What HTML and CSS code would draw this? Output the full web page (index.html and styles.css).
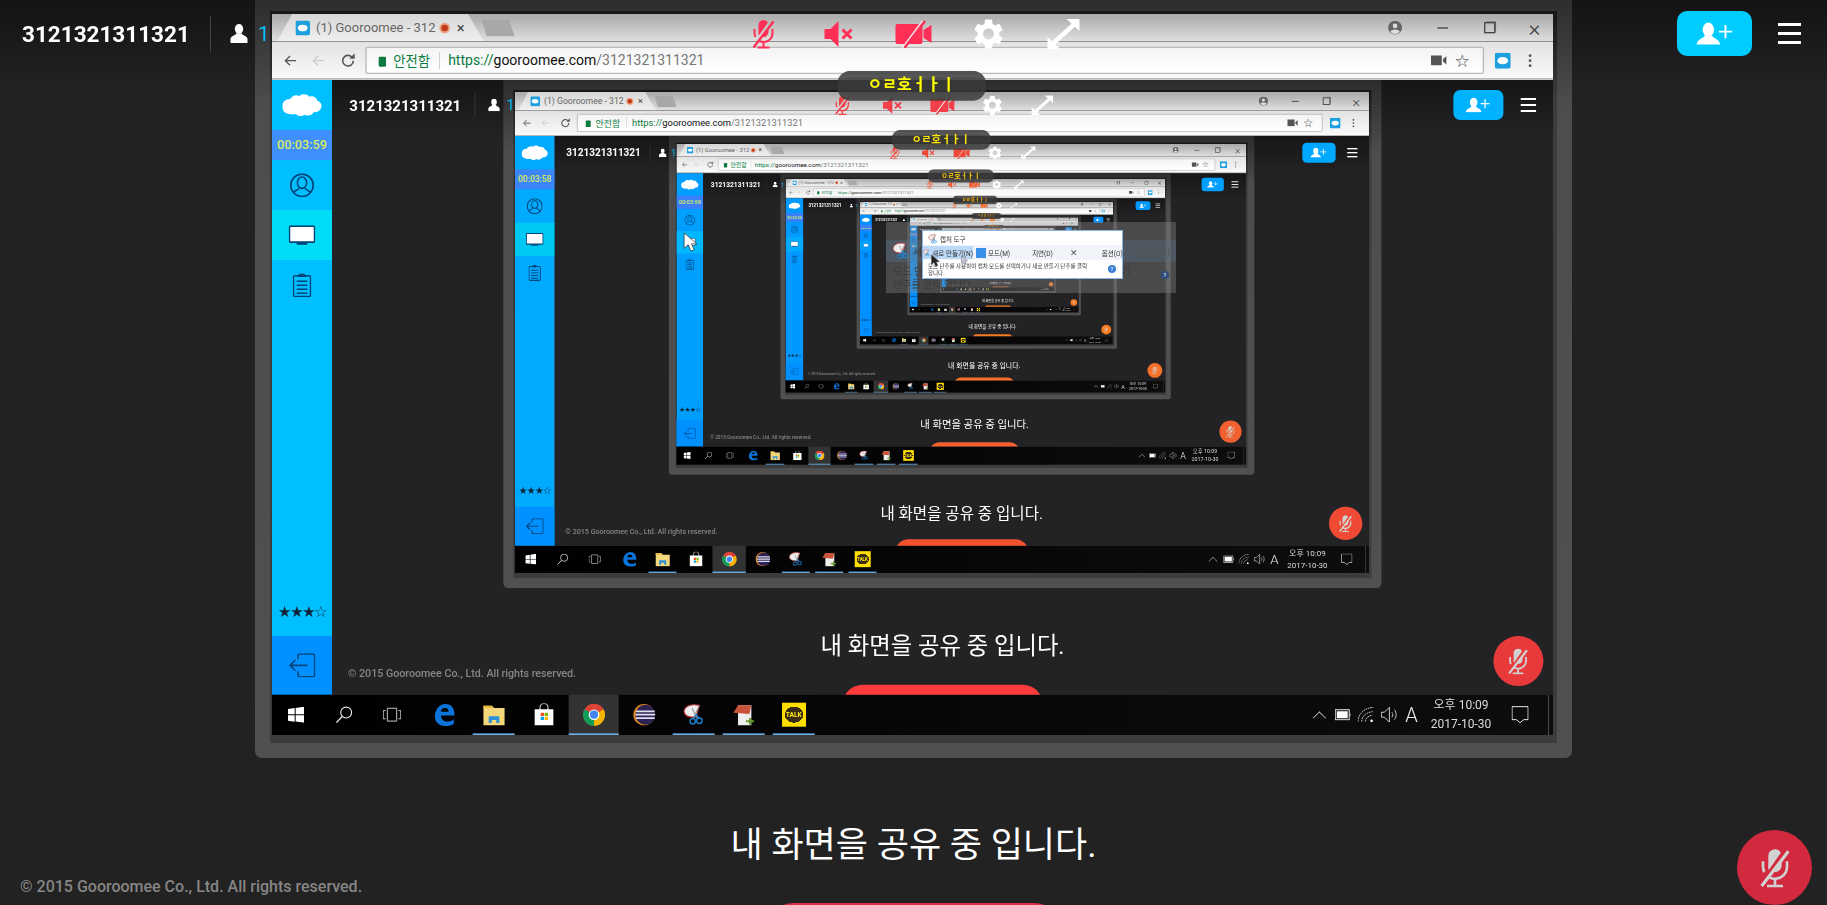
FILE: index.html
```html
<!DOCTYPE html>
<html lang="ko">

<head>
  <meta charset="utf-8">
  <meta name="viewport" content="width=device-width">
  <title>Gooroomee - 3121321311321</title>
  <link rel="stylesheet" href="styles.css">
</head>

<body>
  <svg class="defs" xmlns="http://www.w3.org/2000/svg">
    <symbol id="i-mic" viewBox="0 0 24 30">
      <path d="M7 13V6a5 5 0 0 1 9.4-2.4L7.4 16.5A5 5 0 0 1 7 13z" fill="currentColor"/>
      <path d="M17 10v3a5 5 0 0 1-7 4.6z" fill="currentColor"/>
      <path d="M3 10v4c0 1.5.4 3 1 4M21 10v4a9 9 0 0 1-13.500 7.800M12 23v5M6 28.500h12" fill="none" stroke="currentColor" stroke-width="2"/>
      <path d="M22 2.500L2 28.500" fill="none" stroke="currentColor" stroke-width="2.4"/>
    </symbol>
    <symbol id="i-mute" viewBox="0 0 28 26">
      <path d="M0 8h6l8-8v26l-8-8H0z" fill="currentColor"/>
      <path d="M18 8.500l9 9M27 8.500l-9 9" fill="none" stroke="currentColor" stroke-width="3"/>
    </symbol>
    <symbol id="i-cam" viewBox="0 0 36 28">
      <path d="M2 4h23a2 2 0 0 1 2 2v16a2 2 0 0 1-2 2H2a2 2 0 0 1-2-2V6a2 2 0 0 1 2-2zM28 10l8-5v18l-8-5z" fill="currentColor"/>
      <path d="M27 1L7 28" fill="none" stroke="#e8e8e8" stroke-width="2"/>
      <path d="M29.500 1L9 28" fill="none" stroke="currentColor" stroke-width="2.500"/>
    </symbol>
    <symbol id="i-gear" viewBox="2 2 20 20">
      <path d="M19.14 12.94c.04-.3.06-.61.06-.94 0-.32-.02-.64-.07-.94l2.03-1.58c.18-.14.23-.41.12-.61l-1.92-3.32c-.12-.22-.37-.29-.59-.22l-2.39.96c-.5-.38-1.03-.7-1.62-.94l-.36-2.54c-.04-.24-.24-.41-.48-.41h-3.84c-.24 0-.43.17-.47.41l-.36 2.54c-.59.24-1.13.57-1.62.94l-2.39-.96c-.22-.08-.47 0-.59.22L2.74 8.87c-.12.21-.08.47.12.61l2.03 1.58c-.05.3-.09.63-.09.94s.02.64.07.94l-2.03 1.58c-.18.14-.23.41-.12.61l1.92 3.32c.12.22.37.29.59.22l2.39-.96c.5.38 1.03.7 1.62.94l.36 2.54c.05.24.24.41.48.41h3.84c.24 0 .44-.17.47-.41l.36-2.54c.59-.24 1.13-.56 1.62-.94l2.39.96c.22.08.47 0 .59-.22l1.92-3.32c.12-.22.07-.47-.12-.61l-2.01-1.58zM12 15.6c-1.98 0-3.6-1.62-3.6-3.6s1.62-3.6 3.6-3.6 3.6 1.62 3.6 3.6-1.62 3.6-3.6 3.6z" fill="currentColor"/>
    </symbol>
    <symbol id="i-expand" viewBox="0 0 32 30">
      <path d="M6 24L26 6" fill="none" stroke="currentColor" stroke-width="4.500"/>
      <path d="M19 0h13v12zM0 18l13 12H0z" fill="currentColor"/>
    </symbol>
    <symbol id="i-person" viewBox="0 0 18 19">
      <ellipse cx="9" cy="5" rx="4.200" ry="5" fill="currentColor"/>
      <path d="M6 9.500c-.2 2-5 2-5.500 5.500V19h17v-4c-.5-3.500-5.300-3.500-5.500-5.500z" fill="currentColor"/>
    </symbol>
    <symbol id="i-invite" viewBox="0 0 40 24">
      <ellipse cx="13" cy="8" rx="6" ry="7.500" fill="currentColor"/>
      <path d="M9 14c-.3 3-7.500 3-8.500 9.500h25c-1-6.500-8.200-6.500-8.500-9.500z" fill="currentColor"/>
      <path d="M31 3v14M24 10h14" fill="none" stroke="currentColor" stroke-width="2"/>
    </symbol>
    <symbol id="i-cloud" viewBox="0 0 60 36">
      <path d="M12 31c-7 0-12-5-11-12C0 13 6 8 12 9c2-5 9-8 14-5 4-4 12-3 15 1 5-2 11 1 12 6 5 1 7 6 6 10-1 5-6 8-11 7-3 5-10 7-14 4-4 3-10 3-13-1-3 1-7 1-9 0z" fill="#fff"/>
    </symbol>
    <symbol id="i-user" viewBox="0 0 36 36">
      <circle cx="18" cy="18" r="16.800" fill="none" stroke="currentColor" stroke-width="2.400"/>
      <ellipse cx="18" cy="14" rx="7" ry="8.500" fill="none" stroke="currentColor" stroke-width="2.400"/>
      <path d="M13.500 22c-.5 3-6 3-8 7M22.500 22c.5 3 6 3 8 7" fill="none" stroke="currentColor" stroke-width="2.400"/>
    </symbol>
    <symbol id="i-screen" viewBox="0 0 40 30">
      <rect x="1.200" y="1.200" width="37.600" height="24" rx="1.500" fill="#fff" stroke="currentColor" stroke-width="2.400"/>
      <path d="M12 26h16v3H12z" fill="currentColor"/>
    </symbol>
    <symbol id="i-clip" viewBox="0 0 28 36">
      <rect x="1.200" y="3.500" width="25.600" height="31.300" rx="2.500" fill="none" stroke="currentColor" stroke-width="2.400"/>
      <path d="M9 4.500l2-3h6l2 3zM6 12h16M6 18h16M6 24h16M6 30h16" fill="none" stroke="currentColor" stroke-width="2.200"/>
    </symbol>
    <symbol id="i-exit" viewBox="0 0 40 36">
      <path d="M14 9V4a3 3 0 0 1 3-3h19a3 3 0 0 1 3 3v28a3 3 0 0 1-3 3H17a3 3 0 0 1-3-3v-5" fill="none" stroke="currentColor" stroke-width="2.400"/>
      <path d="M28 18H2M10 10l-8 8 8 8" fill="none" stroke="currentColor" stroke-width="2.400"/>
    </symbol>
    <symbol id="i-arrow" viewBox="0 0 20 20">
      <path d="M18 10H3M9 3l-7 7 7 7" fill="none" stroke="currentColor" stroke-width="2"/>
    </symbol>
    <symbol id="i-reload" viewBox="0 0 24 24">
      <path d="M20 12a8 8 0 1 1-2.500-5.800" fill="none" stroke="currentColor" stroke-width="2.400"/>
      <path d="M14 9h8V1z" fill="currentColor"/>
    </symbol>
    <symbol id="i-fav" viewBox="0 0 24 24">
      <rect width="24" height="24" rx="3" fill="#1ea0e0"/>
      <ellipse cx="12" cy="12" rx="8" ry="5.500" fill="#fff"/>
    </symbol>
    <symbol id="i-account" viewBox="0 0 24 24">
      <circle cx="12" cy="12" r="12" fill="currentColor"/>
      <circle cx="12" cy="9" r="4" fill="#ddd"/>
      <path d="M4 19c2-5 14-5 16 0-4 5-12 5-16 0z" fill="#ddd"/>
    </symbol>
    <symbol id="i-win" viewBox="0 0 24 24">
      <path d="M0 3.500l10-1.500v9.500H0zM11.500 1.800L24 0v11.500H11.500zM0 13h10v9.500L0 21zM11.500 13H24v11l-12.500-1.800z" fill="#fff"/>
    </symbol>
    <symbol id="i-search" viewBox="0 0 24 24">
      <circle cx="15" cy="9" r="7.500" fill="none" stroke="#eee" stroke-width="1.500"/>
      <path d="M9.500 14.500L1.500 23" fill="none" stroke="#eee" stroke-width="1.800"/>
    </symbol>
    <symbol id="i-tasks" viewBox="0 0 32 24">
      <path d="M8 1h16v22H8zM5 5H1v14h4M27 5h4v14h-4" fill="none" stroke="#ddd" stroke-width="1.500"/>
    </symbol>
    <symbol id="i-edge" viewBox="0 0 30 30">
      <path d="M3 15C4 7 10 1 17 1c8 0 12 6 12 15H11c0 5 4 8 9 8 3 0 6-1 8-3v6c-3 2-6 3-10 3C8 30 2 24 3 15zM11 11h10c0-4-2-5-5-5s-5 2-5 5z" fill="#0a74da"/>
    </symbol>
    <symbol id="i-folder" viewBox="0 0 30 30">
      <path d="M1 3h11l3 3h14v23H1z" fill="#f4d77a"/>
      <path d="M1 3h11l3 3H1z" fill="#e8b93f"/>
      <path d="M8 26v-9h14v9h-4v-4h-6v4z" fill="#2f8fd8"/>
    </symbol>
    <symbol id="i-store" viewBox="0 0 30 34">
      <path d="M9 11V6a6 6 0 0 1 12 0v5" fill="none" stroke="#ddd" stroke-width="1.600"/>
      <path d="M1 9h28v24H1z" fill="#fff"/>
      <path d="M10 14h5v5h-5z" fill="#f25022"/>
      <path d="M16 14h5v5h-5z" fill="#7fba00"/>
      <path d="M10 20h5v5h-5z" fill="#00a4ef"/>
      <path d="M16 20h5v5h-5z" fill="#ffb900"/>
    </symbol>
    <symbol id="i-chrome" viewBox="0 0 32 32">
      <circle cx="16" cy="16" r="15.500" fill="#db4437"/>
      <path d="M16 16L2.600 8.200A15.500 15.500 0 0 0 16 31.500z" fill="#0f9d58"/>
      <path d="M16 16v15.500A15.500 15.500 0 0 0 29.400 8.200z" fill="#f4b400"/>
      <circle cx="16" cy="16" r="7.500" fill="#fff"/>
      <circle cx="16" cy="16" r="5.800" fill="#4285f4"/>
    </symbol>
    <symbol id="i-eclipse" viewBox="0 0 34 34">
      <circle cx="17" cy="17" r="16" fill="#e08a1e"/>
      <circle cx="19" cy="17" r="15" fill="#2c2255"/>
      <path d="M5 12h28M4 17h30M5 22h28" stroke="#dfe0ee" stroke-width="2.600"/>
    </symbol>
    <symbol id="i-snip" viewBox="0 0 34 34">
      <path d="M2 12C3 4 14 0 25 3l-5 17C10 22 3 19 2 12z" fill="#eee" stroke="#b33" stroke-width="1.600"/>
      <path d="M25 3l-8 17M14 7l7 15" stroke="#999" stroke-width="1.600"/>
      <circle cx="15" cy="27" r="4" fill="none" stroke="#1c86d8" stroke-width="2"/>
      <circle cx="25" cy="26" r="4" fill="none" stroke="#1c86d8" stroke-width="2"/>
      <path d="M16 23l4-5M24 22l-4-6" stroke="#1c86d8" stroke-width="2"/>
    </symbol>
    <symbol id="i-notes" viewBox="0 0 34 34">
      <path d="M8 3h20v30H8z" fill="#eee"/>
      <path d="M1 14L8 3h20l-3 13z" fill="#c8523a"/>
      <path d="M20 27h12M26 22v10" stroke="#6a9a2c" stroke-width="3"/>
    </symbol>
    <symbol id="i-cursor" viewBox="0 0 16 22">
      <path d="M1 1v17l4.500-4 3 7 3.500-1.500-3-6.500H15z" fill="currentColor" stroke="#333" stroke-width=".8"/>
    </symbol>
    <symbol id="i-battery" viewBox="0 0 32 22">
      <path d="M1 1h28v20H1z" fill="none" stroke="#eee" stroke-width="2"/>
      <path d="M4 4h22v14H4z" fill="#fff"/>
      <path d="M30 8h2v6h-2z" fill="#eee"/>
    </symbol>
    <symbol id="i-wifi" viewBox="0 0 28 26">
      <path d="M1 24C1 12 11 2 26 1M7 24c0-8 7-15 18-16M13 24c0-5 4-9 11-10" fill="none" stroke="#bbb" stroke-width="1.600" stroke-dasharray="3 1"/>
      <circle cx="23" cy="23" r="2.200" fill="#fff"/>
    </symbol>
    <symbol id="i-speaker" viewBox="0 0 28 26">
      <path d="M1 9h5l8-8v24l-8-8H1z" fill="none" stroke="#ddd" stroke-width="1.500"/>
      <path d="M18 9c2 2 2 6 0 8M22 5c4 4 4 12 0 16" fill="none" stroke="#ddd" stroke-width="1.400"/>
    </symbol>
    <symbol id="i-notify" viewBox="0 0 28 28">
      <path d="M1 1h26v21h-7l-6 5-6-5H1z" fill="none" stroke="#eee" stroke-width="1.600"/>
    </symbol>
    <symbol id="i-camsmall" viewBox="0 0 26 18">
      <path d="M0 1h18v16H0zM20 7l6-5v14l-6-5z" fill="currentColor"/>
    </symbol>
    <symbol id="i-dots" viewBox="0 0 6 24">
      <circle cx="3" cy="3" r="2.500" fill="currentColor"/>
      <circle cx="3" cy="12" r="2.500" fill="currentColor"/>
      <circle cx="3" cy="21" r="2.500" fill="currentColor"/>
    </symbol>
  </svg>

  <div id="root" class="viewport">
    <div class="snip-ghost">
      <div class="snip-ghost-band">
        <svg class="snip-ghost-ico"><use href="#i-snip"/></svg>
        <span>새로</span>
        <span class="snip-ghost-opt">옵션(O)</span>
      </div>
      <p class="snip-ghost-text">모드 단추를 사용하여 캡처 모드를 선택하거나 새로 만들기 단추를 클릭 합니다.</p>
      <span class="snip-help snip-help-dark">?</span>
    </div>
    <div class="snip">
      <div class="snip-title"><svg class="snip-ico"><use href="#i-snip"/></svg>캡처 도구</div>
      <div class="snip-tools">
        <span class="snip-new"><svg class="snip-ico"><use href="#i-snip"/></svg>새로 만들기(N)</span>
        <span class="snip-mode">모드(M)</span>
        <span class="snip-delay">지연(D)</span>
        <span class="snip-x">✕</span>
        <span class="snip-opt">옵션(O)</span>
      </div>
      <p class="snip-text">모드 단추를 사용하여 캡처 모드를 선택하거나 새로 만들기 단추를 클릭 합니다.</p>
      <span class="snip-help">?</span>
    </div>
    <svg class="cursor cursor-white"><use href="#i-cursor"/></svg>
    <svg class="cursor cursor-dark"><use href="#i-cursor"/></svg>
    <svg class="cursor cursor-ghost"><use href="#i-cursor"/></svg>
  </div>

  <template id="page-tpl">
    <section class="page">
      <div class="frame">
        <div class="frame-in">
          <div class="capture"></div>
        </div>
      </div>
      <p class="share-msg">내 화면을 공유 중 입니다.</p>
      <div class="stop-btn"></div>
      <header class="head">
        <h1 class="room">3121321311321</h1>
        <span class="head-sep"></span>
        <svg class="head-person"><use href="#i-person"/></svg>
        <span class="count">1</span>
        <div class="head-right">
          <div class="invite"><svg class="invite-ico"><use href="#i-invite"/></svg></div>
          <div class="burger"><span></span><span></span><span></span></div>
        </div>
      </header>
      <div class="tools">
        <svg class="tool tool-mic"><use href="#i-mic"/></svg>
        <svg class="tool tool-mute"><use href="#i-mute"/></svg>
        <svg class="tool tool-cam"><use href="#i-cam"/></svg>
        <svg class="tool tool-gear"><use href="#i-gear"/></svg>
        <svg class="tool tool-expand"><use href="#i-expand"/></svg>
      </div>
      <p class="copyright">© 2015 Gooroomee Co., Ltd. All rights reserved.</p>
      <div class="mic-fab"><svg class="mic-fab-ico"><use href="#i-mic"/></svg></div>
    </section>
  </template>

  <template id="desktop-tpl">
    <div class="desktop">
      <div class="browser">
        <div class="tabstrip">
          <div class="tab">
            <svg class="fav"><use href="#i-fav"/></svg>
            <span class="tab-title">(1) Gooroomee - 312</span>
            <span class="tab-rec"></span>
            <span class="tab-close">×</span>
          </div>
          <div class="tab-new"></div>
          <div class="win-btns">
            <svg class="win-account"><use href="#i-account"/></svg>
            <span class="win-min"></span>
            <span class="win-restore"></span>
            <span class="win-close">×</span>
          </div>
        </div>
        <div class="toolbar">
          <svg class="nav"><use href="#i-arrow"/></svg>
          <svg class="nav nav-fwd"><use href="#i-arrow"/></svg>
          <svg class="nav nav-reload"><use href="#i-reload"/></svg>
          <div class="omnibox">
            <span class="lock"></span>
            <span class="secure">안전함</span>
            <span class="omni-sep"></span>
            <span class="url"><span class="url-scheme">https://</span>gooroomee.com<span class="url-path">/3121321311321</span></span>
            <svg class="omni-cam"><use href="#i-camsmall"/></svg>
            <span class="omni-star">☆</span>
          </div>
          <svg class="ext"><use href="#i-fav"/></svg>
          <svg class="menu-dots"><use href="#i-dots"/></svg>
        </div>
      </div>
      <div class="desk-body">
        <aside class="side">
          <div class="side-logo"><svg class="side-cloud"><use href="#i-cloud"/></svg></div>
          <div class="side-timer"></div>
          <div class="side-item"><svg class="ico-user"><use href="#i-user"/></svg></div>
          <div class="side-item side-active"><svg class="ico-screen"><use href="#i-screen"/></svg></div>
          <div class="side-item"><svg class="ico-clip"><use href="#i-clip"/></svg></div>
          <div class="side-stars">★★★☆</div>
          <div class="side-exit"><svg class="ico-exit"><use href="#i-exit"/></svg></div>
        </aside>
        <div class="page-slot"></div>
      </div>
      <div class="taskbar">
        <span class="task-cell task-sys"><svg class="task-win"><use href="#i-win"/></svg></span>
        <span class="task-cell task-sys"><svg class="task-thin"><use href="#i-search"/></svg></span>
        <span class="task-cell task-sys"><svg class="task-thin"><use href="#i-tasks"/></svg></span>
        <span class="task-cell task-edge"><svg class="task-ico"><use href="#i-edge"/></svg></span>
        <span class="task-cell is-open"><svg class="task-ico"><use href="#i-folder"/></svg></span>
        <span class="task-cell"><svg class="task-ico"><use href="#i-store"/></svg></span>
        <span class="task-cell is-open is-active"><svg class="task-ico"><use href="#i-chrome"/></svg></span>
        <span class="task-cell"><svg class="task-ico"><use href="#i-eclipse"/></svg></span>
        <span class="task-cell is-open"><svg class="task-ico"><use href="#i-snip"/></svg></span>
        <span class="task-cell is-open"><svg class="task-ico"><use href="#i-notes"/></svg></span>
        <span class="task-cell is-open"><span class="kakao">TALK</span></span>
        <div class="tray">
          <span class="tray-chev"></span>
          <svg class="tray-bat"><use href="#i-battery"/></svg>
          <svg class="tray-ico"><use href="#i-wifi"/></svg>
          <svg class="tray-ico"><use href="#i-speaker"/></svg>
          <span class="tray-ime">A</span>
          <span class="tray-clock"><span>오후 10:09</span><span>2017-10-30</span></span>
          <svg class="tray-note"><use href="#i-notify"/></svg>
          <span class="tray-edge"></span>
        </div>
      </div>
      <div class="toast">ㅇㄹ호ㅓㅏㅣ</div>
    </div>
  </template>

  <script src="app.js"></script>
</body>

</html>
```

FILE: styles.css
```css
html,
body {
  margin: 0;
  height: 100%;
  overflow: hidden;
  background: #222;
  font-family: Roboto, "Noto Sans CJK KR", sans-serif;
}

p,
h1 {
  margin: 0;
}

.defs {
  position: absolute;
  width: 0;
  height: 0;
}

.viewport {
  position: relative;
  width: 1827px;
  height: 905px;
  overflow: hidden;
}

/* colours drift a bit at every level of the recording */
.lvl-0 {
  --page: #222222;
  --page-top: #131313;
  --invite: #00ccff;
  --fab: #d3293f;
  --stop: #e22c46;
  --tool: #ff2f55;
  --side: #00bfff;
  --active: #00dcf5;
  --timer: #3f8fff;
  --exit: #0090ff;
  --toast: #ffff00;
}

.lvl-1 {
  --page: #232326;
  --page-top: #161618;
  --invite: #00b2ff;
  --fab: #e83a3a;
  --stop: #ff3b3b;
  --tool: #f2404a;
  --side: #00bfff;
  --active: #00dcf5;
  --timer: #3f8fff;
  --exit: #0090ff;
  --toast: #ffff00;
}

.lvl-2 {
  --invite: #00a8ff;
  --fab: #f04a35;
  --stop: #f4512f;
  --tool: #ee4a3a;
  --side: #00abff;
  --active: #00c8f5;
  --timer: #3a86f8;
  --toast: #ffe600;
}

.lvl-3 {
  --invite: #009fff;
  --fab: #f26030;
  --stop: #f56030;
  --tool: #f06038;
  --side: #009fff;
  --active: #00b8ff;
  --timer: #3a80f8;
  --toast: #ffcc00;
}

.lvl-4 {
  --invite: #0099ff;
  --fab: #f57028;
  --stop: #f57028;
  --tool: #f07030;
  --side: #0099ff;
  --active: #00aaff;
  --toast: #ffb000;
}

.lvl-5,
.lvl-6,
.lvl-7 {
  --invite: #0090ff;
  --fab: #fa7a20;
  --stop: #fa7a20;
  --tool: #f08030;
  --side: #0090ff;
  --active: #00a0ff;
  --toast: #ff9a00;
}

/* page */
.page {
  --head-left: 26px;
  position: relative;
  flex: 1;
  height: 922px;
  display: flex;
  flex-direction: column;
  align-items: center;
  overflow: hidden;
  color: #fff;
  background: linear-gradient(var(--page-top), var(--page) 90px);
}

.page.lvl-0 {
  --head-left: 22px;
  flex: none;
  width: 1827px;
  margin-top: -4px;
}

.frame {
  flex: none;
  padding: 15px;
  border-radius: 0 0 7px 7px;
  background: linear-gradient(#2c2c2e, #4d4d4d 110px, #505050);
}

/* the deep captures were taken a moment earlier, slightly off centre */
.lvl-3 > .frame {
  margin-left: 8px;
}

.lvl-4 > .frame,
.lvl-5 > .frame {
  margin-left: 26px;
}

.frame-in {
  padding: 3px 4px 8px 2px;
  background: linear-gradient(#161616, #3c3c3c 90px);
}

.capture {
  width: 1281px;
  height: 721px;
  overflow: hidden;
  background: #232326;
}

.share-msg {
  flex: none;
  margin-top: 63px;
  font-size: 35px;
  line-height: 50px;
  white-space: nowrap;
}

.stop-btn {
  flex: none;
  width: 300px;
  height: 60px;
  margin-top: 32px;
  border-radius: 30px;
  background: var(--stop);
}

/* over the frame */
.head {
  position: absolute;
  top: 0;
  left: 0;
  right: 0;
  height: 75px;
  display: flex;
  align-items: center;
  padding: 0 26px 0 var(--head-left);
}

.room {
  font-size: 22.5px;
  font-weight: 700;
  color: #fff;
}

.head-sep {
  width: 1px;
  height: 36px;
  margin: 0 19px 0 20px;
  background: #444;
}

.head-person {
  width: 18px;
  height: 19px;
  color: #fff;
}

.count {
  margin-left: 10px;
  font-size: 21px;
  color: #00c0ff;
}

.head-right {
  margin-left: auto;
  display: flex;
  align-items: center;
  gap: 26px;
}

.invite {
  width: 75px;
  height: 45px;
  display: flex;
  align-items: center;
  justify-content: center;
  border-radius: 10px;
  background: var(--invite);
}

.invite-ico {
  width: 38px;
  height: 23px;
  color: #fff;
}

.burger {
  width: 23px;
  display: flex;
  flex-direction: column;
  gap: 6px;
}

.burger span {
  height: 3px;
  background: #fff;
}

.tools {
  position: absolute;
  top: 22px;
  left: 0;
  right: 0;
  height: 32px;
  display: flex;
  justify-content: center;
  align-items: center;
}

.tool {
  width: 75px;
  height: 30px;
  color: var(--tool);
}

.tool-mute {
  height: 26px;
}

.tool-cam {
  height: 28px;
}

.tool-gear,
.tool-expand {
  color: #fff;
}

.copyright {
  position: absolute;
  left: calc(var(--head-left) - 2px);
  top: 881px;
  font-size: 16px;
  line-height: 20px;
  font-weight: 500;
  color: #868686;
  white-space: nowrap;
}

.mic-fab {
  position: absolute;
  right: 15px;
  top: 834px;
  width: 75px;
  height: 75px;
  display: flex;
  align-items: center;
  justify-content: center;
  border-radius: 50%;
  background: var(--fab);
}

.mic-fab-ico {
  width: 32px;
  height: 40px;
  color: #d2d2d2;
}

/* captured desktop */
.desktop {
  position: relative;
  width: 1921.5px;
  height: 1081.5px;
  display: flex;
  flex-direction: column;
  overflow: hidden;
  transform: scale(0.6667);
  transform-origin: 0 0;
}

.browser {
  flex: none;
  height: 99px;
  color: #555;
}

.tabstrip {
  height: 42px;
  display: flex;
  align-items: center;
  background: linear-gradient(#a9a9a9, #dfdfdf);
  border-bottom: 1px solid #a8a8a8;
  box-sizing: border-box;
}

.tab {
  flex: none;
  width: 310px;
  height: 41px;
  margin-left: 8px;
  display: flex;
  align-items: center;
  box-sizing: border-box;
  padding: 0 0 0 27px;
  background: linear-gradient(#d6d6d6, #f0f0f0);
  clip-path: polygon(0 100%, 22px 0, 286px 0, 100% 100%);
}

.fav {
  flex: none;
  width: 22px;
  height: 24px;
}

.tab-title {
  flex: none;
  width: 178px;
  margin-left: 9px;
  font-size: 19.5px;
  color: #666;
  white-space: nowrap;
}

.tab-rec {
  flex: none;
  width: 10px;
  height: 10px;
  margin-left: 7px;
  border: 3px solid #e8a080;
  border-radius: 50%;
  background: #c03a1a;
}

.tab-close {
  margin-left: 10px;
  font-size: 22px;
  color: #444;
}

.tab-new {
  flex: none;
  width: 50px;
  height: 26px;
  margin-left: -4px;
  background: #a8a8a8;
  clip-path: polygon(0 0, 82% 0, 100% 100%, 16% 100%);
}

.win-btns {
  margin-left: auto;
  display: flex;
  align-items: center;
  padding-right: 17px;
}

.win-account {
  width: 21px;
  height: 21px;
  color: #666;
}

.win-min {
  width: 16px;
  height: 2px;
  margin-left: 53px;
  background: #444;
}

.win-restore {
  width: 13px;
  height: 13px;
  margin-left: 54px;
  border: 2px solid #444;
  box-shadow: 2px -2px 0 -1px #777;
}

.win-close {
  width: 20px;
  margin-left: 50px;
  font-size: 34px;
  line-height: 30px;
  font-weight: 300;
  color: #444;
}

.toolbar {
  height: 57px;
  display: flex;
  align-items: center;
  padding-left: 18px;
  box-sizing: border-box;
  background: linear-gradient(#e2e2e2, #fafafa);
  border-bottom: 2px solid #c8c8c8;
}

.nav {
  flex: none;
  width: 20px;
  height: 20px;
  margin-right: 22px;
  color: #555;
}

.nav-fwd {
  color: #ccc;
}

.nav-reload {
  width: 24px;
  height: 24px;
  margin-right: 14px;
}

.omnibox {
  flex: none;
  width: 1678px;
  height: 41px;
  display: flex;
  align-items: center;
  box-sizing: border-box;
  padding: 0 19px 0 18px;
  background: linear-gradient(#f4f4f4, #fff);
  border: 2px solid #bbb;
  border-radius: 3px;
}

.lock {
  flex: none;
  width: 11px;
  height: 15px;
  margin-top: 3px;
  background: #0b7a3e;
  border-radius: 2px;
}

.secure {
  margin-left: 11px;
  font-size: 20px;
  color: #0b8043;
}

.omni-sep {
  width: 1px;
  height: 26px;
  margin: 0 12px 0 14px;
  background: #bbb;
}

.url {
  font-size: 21px;
  color: #111;
  white-space: nowrap;
}

.url-scheme {
  color: #0b7a3e;
}

.url-path {
  color: #777;
}

.omni-cam {
  width: 24px;
  height: 17px;
  margin-left: auto;
  color: #555;
}

.omni-star {
  margin-left: 12px;
  font-family: "DejaVu Sans", sans-serif;
  font-size: 26px;
  line-height: 30px;
  color: #333;
}

.ext {
  flex: none;
  width: 24px;
  height: 24px;
  margin-left: 16px;
}

.menu-dots {
  flex: none;
  width: 6px;
  height: 20px;
  margin-left: 26px;
  color: #555;
}

.toast {
  position: absolute;
  left: 848px;
  top: 85px;
  width: 223px;
  height: 45px;
  border-radius: 20px;
  font-size: 24px;
  font-weight: 700;
  line-height: 43px;
  text-align: center;
  color: var(--toast);
  background: rgba(58, 58, 58, 0.85);
}

.desk-body {
  flex: none;
  height: 922px;
  display: flex;
}

.side {
  flex: none;
  width: 90px;
  display: flex;
  flex-direction: column;
  color: #00457a;
  background: var(--side);
}

.side-logo {
  height: 75px;
  display: flex;
  align-items: center;
  justify-content: center;
}

.side-cloud {
  width: 60px;
  height: 36px;
}

.side-timer {
  height: 45px;
  display: flex;
  align-items: center;
  justify-content: center;
  font-size: 19px;
  font-weight: 500;
  color: #d8ea5a;
  background: var(--timer);
}

.side-item {
  height: 75px;
  display: flex;
  align-items: center;
  justify-content: center;
}

.side-active {
  background: var(--active);
}

.ico-user {
  width: 36px;
  height: 36px;
}

.ico-screen {
  width: 40px;
  height: 30px;
}

.ico-clip {
  width: 28px;
  height: 36px;
}

.side-stars {
  margin-top: auto;
  height: 36px;
  line-height: 36px;
  text-align: center;
  font-family: "DejaVu Sans", sans-serif;
  font-size: 23px;
  letter-spacing: -2.5px;
  white-space: nowrap;
  color: #0c2436;
}

.side-exit {
  margin-top: 18px;
  height: 88px;
  display: flex;
  align-items: center;
  justify-content: center;
  background: var(--exit);
}

.ico-exit {
  width: 40px;
  height: 36px;
}

.page-slot {
  flex: 1;
  min-width: 0;
  display: flex;
}

.taskbar {
  flex: none;
  height: 60.5px;
  display: flex;
  align-items: stretch;
  background: linear-gradient(90deg, #000, #0f0c0c);
}

.task-cell {
  position: relative;
  flex: none;
  width: 75px;
  display: flex;
  align-items: center;
  justify-content: center;
}

.task-sys {
  width: 72px;
}

.task-edge {
  margin-left: 4px;
}

.is-open::after {
  content: "";
  position: absolute;
  left: 6px;
  right: 6px;
  bottom: 0;
  height: 3px;
  background: #6ab0e8;
}

.is-active {
  background: #333;
}

.is-active::after {
  left: 0;
  right: 0;
}

.task-win {
  width: 24px;
  height: 24px;
}

.task-ico {
  width: 34px;
  height: 34px;
}

.task-thin {
  width: 28px;
  height: 26px;
}

.kakao {
  width: 36px;
  height: 36px;
  display: flex;
  align-items: center;
  justify-content: center;
  font-size: 10px;
  font-weight: 700;
  color: #ffe812;
  background: radial-gradient(ellipse 14px 12px, #3a2c14 98%, #ffde00);
}

.tray {
  margin-left: auto;
  display: flex;
  align-items: center;
  color: #eee;
}

.tray-chev {
  width: 13px;
  height: 13px;
  margin: 9px 16px 0 0;
  border-left: 1.5px solid #eee;
  border-top: 1.5px solid #eee;
  transform: rotate(45deg);
}

.tray-bat {
  width: 24px;
  height: 18px;
  margin-right: 10px;
}

.tray-ico {
  width: 26px;
  height: 24px;
  margin-right: 9px;
}

.tray-ime {
  margin: 0 15px 0 2px;
  font-size: 30px;
  font-weight: 300;
}

.tray-clock {
  width: 100px;
  display: flex;
  flex-direction: column;
  align-items: center;
  gap: 2px;
  font-size: 18px;
  line-height: 26px;
  color: #ddd;
}

.tray-note {
  width: 26px;
  height: 26px;
  margin-left: 25px;
}

.tray-edge {
  align-self: stretch;
  width: 1px;
  margin: 0 7px 0 29px;
  background: #666;
}

/* snipping tool window left on top of the recording */
.snip-ghost {
  position: absolute;
  left: 886px;
  top: 222px;
  width: 290px;
  height: 71px;
  box-sizing: border-box;
  padding-top: 18px;
  color: #3c3c3c;
  font-size: 10px;
  background: rgba(140, 140, 140, 0.38);
}

.snip-ghost-band {
  height: 22px;
  display: flex;
  align-items: center;
  gap: 3px;
  padding: 0 6px;
  background: rgba(90, 120, 150, 0.3);
}

.snip-ghost-ico {
  width: 18px;
  height: 18px;
}

.snip-ghost-opt {
  margin-left: auto;
  color: #555;
}

.snip-ghost-text {
  width: 255px;
  margin-top: 3px;
  padding-left: 7px;
  font-size: 10px;
  line-height: 13px;
  word-break: keep-all;
}

.snip-help {
  position: absolute;
  right: 6px;
  bottom: 5px;
  width: 8px;
  height: 8px;
  border-radius: 50%;
  font-size: 6px;
  line-height: 8px;
  text-align: center;
  color: #fff;
  background: #3a7fd8;
}

.snip-help-dark {
  right: 7px;
  bottom: 14px;
  background: #2f4f80;
}

.snip {
  position: absolute;
  left: 922px;
  top: 230px;
  width: 201px;
  height: 49px;
  box-sizing: border-box;
  border: 1px solid #8ab4e8;
  color: #333;
  font-size: 6.5px;
  background: #fff;
}

.snip-title {
  height: 12px;
  display: flex;
  align-items: center;
  gap: 2px;
  padding: 2px 0 0 5px;
}

.snip-ico {
  width: 10px;
  height: 10px;
}

.snip-tools {
  height: 15px;
  display: flex;
  align-items: center;
  white-space: nowrap;
  background: #f0f3f7;
}

.snip-new {
  width: 50px;
  height: 13px;
  flex: none;
  display: flex;
  align-items: center;
  gap: 2px;
  background: #bcd9f7;
}

.snip-mode {
  margin-left: 3px;
  padding-left: 2px;
  border-left: 10px solid #3a90e8;
}

.snip-delay {
  margin-left: 22px;
}

.snip-x {
  margin-left: 17px;
  font-size: 9px;
  color: #555;
}

.snip-opt {
  margin-left: 24px;
}

.snip-text {
  width: 176px;
  padding: 3px 0 0 5px;
  font-size: 5.5px;
  line-height: 7px;
  word-break: keep-all;
}

.cursor {
  position: absolute;
}

.cursor-white {
  left: 683px;
  top: 232px;
  width: 15px;
  height: 20px;
  color: #fff;
}

.cursor-dark {
  left: 931px;
  top: 254px;
  width: 9px;
  height: 13px;
  color: #222;
}

.cursor-ghost {
  left: 961px;
  top: 255px;
  width: 7px;
  height: 10px;
  color: #ccd;
}
```

FILE: app.js
```js
// the shared screen shows itself, so the page is built inside its own capture
const DEPTH = 7;

function buildPage(level) {
  const page = document.getElementById("page-tpl").content.cloneNode(true).firstElementChild;
  page.classList.add("lvl-" + level);
  if (level < DEPTH) {
    page.querySelector(".capture").appendChild(buildDesktop(level + 1));
  }
  return page;
}

function buildDesktop(level) {
  const desk = document.getElementById("desktop-tpl").content.cloneNode(true).firstElementChild;
  desk.classList.add("lvl-" + level);
  desk.querySelector(".side-timer").textContent = level == 1 ? "00:03:59" : "00:03:58";
  desk.querySelector(".page-slot").appendChild(buildPage(level));
  return desk;
}

const root = document.getElementById("root");
root.insertBefore(buildPage(0), root.firstChild);
```
